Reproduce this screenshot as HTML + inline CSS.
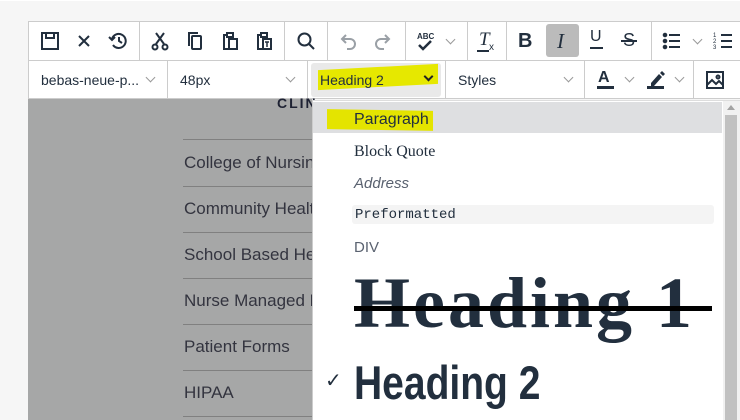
<!DOCTYPE html>
<html><head><style>
*{box-sizing:border-box;margin:0;padding:0}
body{width:740px;height:420px;overflow:hidden;background:#f6f6f6;font-family:"Liberation Sans",sans-serif;position:relative}
.a{position:absolute}
.tb{left:28px;top:21px;width:712px;height:78px;background:#fff;border:1px solid #ccc;border-right:none}
.ic{position:absolute;top:31px;width:20px;height:20px}
.vs{position:absolute;width:1px;background:#ccc}
.chev{position:absolute;width:7px;height:7px;border-right:1.5px solid #999;border-bottom:1.5px solid #999;transform:rotate(45deg)}
.t2{position:absolute;top:72px;font-size:14px;color:#222f3e}
.lk{position:absolute;left:184px;font-size:17px;color:#33343f;font-family:"Liberation Sans",sans-serif;white-space:nowrap}
.ln{position:absolute;left:183px;width:130px;height:1px;background:#808080}
</style></head><body>
<div class="a" style="left:0;top:0;width:740px;height:1px;background:#fff"></div>
<div class="a tb"></div>
<div class="a" style="left:28px;top:60px;width:712px;height:1px;background:#ccc"></div>
<div class="vs" style="left:139px;top:22px;height:38px"></div>
<div class="vs" style="left:284px;top:22px;height:38px"></div>
<div class="vs" style="left:327px;top:22px;height:38px"></div>
<div class="vs" style="left:405px;top:22px;height:38px"></div>
<div class="vs" style="left:467px;top:22px;height:38px"></div>
<div class="vs" style="left:506px;top:22px;height:38px"></div>
<div class="vs" style="left:651px;top:22px;height:38px"></div>
<div class="vs" style="left:167px;top:61px;height:38px"></div>
<div class="vs" style="left:307px;top:61px;height:38px"></div>
<div class="vs" style="left:445px;top:61px;height:38px"></div>
<div class="vs" style="left:584px;top:61px;height:38px"></div>
<div class="vs" style="left:693px;top:61px;height:38px"></div>
<svg class="ic" style="left:40px" viewBox="0 0 20 20" fill="none" stroke="#222f3e" stroke-width="2"><rect x="2" y="2" width="16" height="16"/><path d="M6 2v5h8V2"/></svg>
<svg class="ic" style="left:74px" viewBox="0 0 20 20" stroke="#222f3e" stroke-width="2"><path d="M5 5l10 10M15 5L5 15"/></svg>
<svg class="ic" style="left:108px" viewBox="0 0 20 20" fill="none" stroke="#222f3e" stroke-width="2"><path d="M4 8a7 7 0 1 1 1 6"/><path d="M1 6l3 3 3-3"/><path d="M11 6v4l3 2"/></svg>
<svg class="ic" style="left:150px" viewBox="0 0 20 20" fill="none" stroke="#222f3e" stroke-width="2"><path d="M6 2l8 11M14 2L6 13"/><circle cx="5" cy="16" r="2.5"/><circle cx="15" cy="16" r="2.5"/></svg>
<svg class="ic" style="left:185px" viewBox="0 0 20 20" fill="none" stroke="#222f3e" stroke-width="2"><path d="M4 15V2h9"/><rect x="7" y="5" width="9" height="13" rx="1"/></svg>
<svg class="ic" style="left:220px" viewBox="0 0 20 20" fill="none" stroke="#222f3e" stroke-width="2"><path d="M7 4H4v14h5"/><path d="M7 2h6v4H7z"/><rect x="9" y="8" width="8" height="10"/></svg>
<svg class="ic" style="left:254px" viewBox="0 0 20 20" fill="none" stroke="#222f3e" stroke-width="2"><path d="M7 4H4v14h4"/><path d="M7 2h6v4H7z"/><rect x="9" y="8" width="8" height="10"/><path d="M11 11h4M13 11v5" stroke-width="1.5"/></svg>
<svg class="ic" style="left:296px" viewBox="0 0 20 20" fill="none" stroke="#222f3e" stroke-width="2"><circle cx="8.5" cy="8.5" r="6"/><path d="M13 13l5 5"/></svg>
<svg class="ic" style="left:338px" viewBox="0 0 20 20" fill="none" stroke="#9aa0a6" stroke-width="2"><path d="M4 8h8a5 5 0 0 1 0 10H9"/><path d="M8 4L4 8l4 4"/></svg>
<svg class="ic" style="left:373px" viewBox="0 0 20 20" fill="none" stroke="#9aa0a6" stroke-width="2"><path d="M16 8H8a5 5 0 0 0 0 10h3"/><path d="M12 4l4 4-4 4"/></svg>
<div class="a" style="left:417px;top:32px;font-size:8px;font-weight:bold;color:#222f3e">ABC</div>
<svg class="ic" style="left:416px;top:38px" viewBox="0 0 20 20" fill="none" stroke="#222f3e" stroke-width="2.5"><path d="M3 7l4 4 8-8"/></svg>
<div class="chev" style="left:447px;top:36px"></div>
<div class="a" style="left:479px;top:29px;font-size:19px;font-style:italic;color:#222f3e;font-family:'Liberation Serif',serif">T</div>
<div class="a" style="left:477px;top:50px;width:12px;height:2px;background:#222f3e"></div>
<div class="a" style="left:489px;top:42px;font-size:10px;color:#222f3e">x</div>
<div class="a" style="left:518px;top:30px;font-size:20px;font-weight:bold;color:#222f3e">B</div>
<div class="a" style="left:546px;top:24px;width:33px;height:33px;background:#bbb;border-radius:3px"></div>
<div class="a" style="left:557px;top:29px;font-size:21px;font-style:italic;color:#222f3e;font-family:'Liberation Serif',serif">I</div>
<div class="a" style="left:590px;top:28px;font-size:16px;color:#222f3e">U</div>
<div class="a" style="left:590px;top:47px;width:13px;height:2px;background:#222f3e"></div>
<div class="a" style="left:623px;top:30px;font-size:18px;color:#222f3e">S</div>
<div class="a" style="left:621px;top:40px;width:16px;height:2px;background:#222f3e"></div>
<svg class="ic" style="left:662px" viewBox="0 0 20 20" stroke="#222f3e" stroke-width="2"><circle cx="3" cy="4" r="1.3"/><circle cx="3" cy="10" r="1.3"/><circle cx="3" cy="16" r="1.3"/><path d="M7 4h11M7 10h11M7 16h11"/></svg>
<div class="chev" style="left:694px;top:36px"></div>
<svg class="ic" style="left:713px" viewBox="0 0 20 20" stroke="#222f3e" stroke-width="2"><path d="M8 4h11M8 10h11M8 16h11"/><text x="0" y="6" font-size="6" stroke="none" fill="#222f3e">1</text><text x="0" y="12" font-size="6" stroke="none" fill="#222f3e">2</text><text x="0" y="18" font-size="6" stroke="none" fill="#222f3e">3</text></svg>
<div class="t2" style="left:41px">bebas-neue-p...</div>
<div class="chev" style="left:147px;top:74px"></div>
<div class="t2" style="left:180px">48px</div>
<div class="chev" style="left:287px;top:74px"></div>
<div class="a" style="left:311px;top:63px;width:130px;height:34px;background:#e9e9e9;border-radius:3px"></div>
<div class="a" style="left:318px;top:67px;width:120px;height:20px;background:#e6e800;transform:skewY(-3deg)"></div>
<div class="t2" style="left:320px;color:#222f3e">Heading 2</div>
<div class="a" style="left:425px;top:73px;width:7px;height:7px;border-right:2px solid #222;border-bottom:2px solid #222;transform:rotate(45deg)"></div>
<div class="t2" style="left:458px">Styles</div>
<div class="chev" style="left:565px;top:74px"></div>
<div class="a" style="left:598px;top:69px;font-size:16px;font-weight:bold;color:#222f3e">A</div>
<div class="a" style="left:597px;top:86px;width:17px;height:3px;background:#222f3e"></div>
<div class="chev" style="left:626px;top:74px"></div>
<svg class="ic" style="left:647px;top:70px" viewBox="0 0 20 20" fill="#222f3e"><path d="M4 13l8-9 3 3-8 9H4z"/><path d="M13 3l2-2 3 3-2 2z"/></svg>
<div class="a" style="left:647px;top:86px;width:17px;height:3px;background:#222f3e"></div>
<div class="chev" style="left:676px;top:74px"></div>
<svg class="ic" style="left:705px;top:70px" viewBox="0 0 20 20" fill="none" stroke="#222f3e" stroke-width="2"><rect x="2" y="2" width="16" height="16"/><path d="M2 15l5-5 4 4 3-3 4 4"/><circle cx="13" cy="7" r="1.5"/></svg>
<div class="a" style="left:28px;top:99px;width:284px;height:321px;background:#a6a7a7"></div>
<div class="a" style="left:277px;top:95px;font-size:14px;font-weight:bold;letter-spacing:2px;color:#1e2233">CLIN</div>
<div class="ln" style="top:139px"></div>
<div class="lk" style="top:153px">College of Nursing</div>
<div class="ln" style="top:186px"></div>
<div class="lk" style="top:199px">Community Health</div>
<div class="ln" style="top:232px"></div>
<div class="lk" style="top:245px">School Based Health</div>
<div class="ln" style="top:278px"></div>
<div class="lk" style="top:291px">Nurse Managed Health</div>
<div class="ln" style="top:324px"></div>
<div class="lk" style="top:337px">Patient Forms</div>
<div class="ln" style="top:370px"></div>
<div class="lk" style="top:383px">HIPAA</div>
<div class="ln" style="top:416px"></div>
<div class="a" style="left:312px;top:100px;width:428px;height:320px;background:#fff;border-left:1px solid #ccc;border-top:1px solid #ddd"></div>
<div class="a" style="left:313px;top:102px;width:409px;height:31px;background:#dedfe1"></div>
<div class="a" style="left:327px;top:110px;width:106px;height:20px;background:#e4e400;transform:skewY(1deg)"></div>
<div class="a" style="left:354px;top:111px;font-size:16px;color:#222f3e">Paragraph</div>
<div class="a" style="left:354px;top:143px;font-size:16px;color:#222f3e;font-family:'Liberation Serif',serif">Block Quote</div>
<div class="a" style="left:354px;top:175px;font-size:15px;font-style:italic;color:#5a6270">Address</div>
<div class="a" style="left:352px;top:205px;width:362px;height:19px;background:#f4f4f4;border-radius:3px"></div>
<div class="a" style="left:355px;top:207px;font-size:14px;color:#222f3e;font-family:'Liberation Mono',monospace">Preformatted</div>
<div class="a" style="left:354px;top:239px;font-size:15px;color:#5a6270">DIV</div>
<div class="a" style="left:354px;top:262px;font-size:72px;font-weight:bold;color:#222f3e;font-family:'Liberation Serif',serif;letter-spacing:3px;white-space:nowrap">Heading 1</div>
<div class="a" style="left:354px;top:306px;width:358px;height:5px;background:#000"></div>
<div class="a" style="left:325px;top:368px;font-size:20px;color:#222f3e">✓</div>
<div class="a" style="left:354px;top:355px;font-size:47px;font-weight:bold;color:#222f3e;transform:scaleX(0.83);transform-origin:left;white-space:nowrap">Heading 2</div>
<div class="a" style="left:723px;top:101px;width:17px;height:319px;background:#f1f1f1"></div>
<div class="a" style="left:725px;top:115px;width:12px;height:305px;background:#c1c1c1"></div>
<div class="a" style="left:727px;top:105px;width:0;height:0;border-left:4px solid transparent;border-right:4px solid transparent;border-bottom:5px solid #a3a3a3"></div>
</body></html>
